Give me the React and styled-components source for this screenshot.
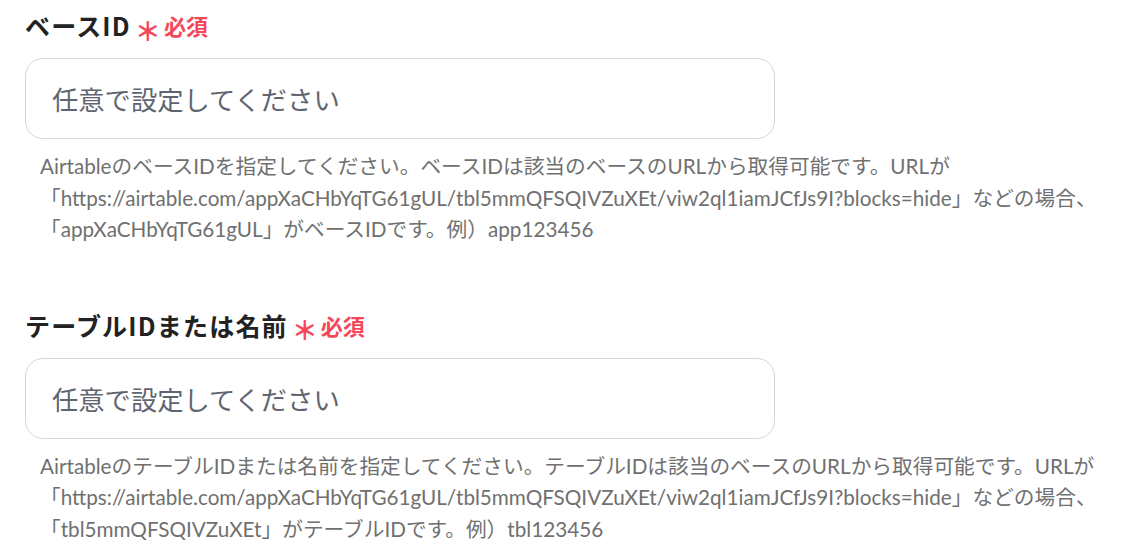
import React from "react";
import styled, { createGlobalStyle } from "styled-components";

const GlobalStyle = createGlobalStyle`
  body {
    margin: 0;
    background: #ffffff;
    font-family: "Noto Sans CJK JP", "Noto Sans", sans-serif;
  }
`;

const Page = styled.main`
  display: flex;
  flex-direction: column;
  gap: 63px;
  padding: 9px 25px 0 25px;
`;

const Field = styled.section`
  display: flex;
  flex-direction: column;
`;

const LabelRow = styled.div`
  display: flex;
  align-items: center;
  height: 32px;
  margin-bottom: 17px;
`;

const LabelText = styled.label`
  font-size: 25px;
  font-weight: 700;
  color: #222222;
  letter-spacing: 1.2px;
`;

const Asterisk = styled.span`
  margin: 9px 3px 0 4px;
  font-size: 26px;
  font-weight: 700;
  line-height: 1;
  color: #f5475a;
`;

const Required = styled.span`
  font-size: 22px;
  font-weight: 700;
  color: #f5475a;
`;

const TextInput = styled.input`
  box-sizing: border-box;
  width: 750px;
  height: 81px;
  padding: 0 26px;
  border: 1px solid #d3d5db;
  border-radius: 18px;
  font-family: inherit;
  font-size: 26.3px;
  color: #222222;
  outline: none;

  &::placeholder {
    color: #5f6570;
  }
`;

const Help = styled.p`
  margin: 12px 0 0 0;
  padding-left: 15px;
  font-family: Lato, "Noto Sans CJK JP", sans-serif;
  font-size: 20.7px;
  line-height: 31.5px;
  color: #707070;
  white-space: nowrap;
`;

const fields = [
  {
    label: "ベースID",
    help: [
      "AirtableのベースIDを指定してください。ベースIDは該当のベースのURLから取得可能です。URLが",
      "「https://airtable.com/appXaCHbYqTG61gUL/tbl5mmQFSQIVZuXEt/viw2ql1iamJCfJs9I?blocks=hide」などの場合、",
      "「appXaCHbYqTG61gUL」がベースIDです。例）app123456",
    ],
  },
  {
    label: "テーブルIDまたは名前",
    help: [
      "AirtableのテーブルIDまたは名前を指定してください。テーブルIDは該当のベースのURLから取得可能です。URLが",
      "「https://airtable.com/appXaCHbYqTG61gUL/tbl5mmQFSQIVZuXEt/viw2ql1iamJCfJs9I?blocks=hide」などの場合、",
      "「tbl5mmQFSQIVZuXEt」がテーブルIDです。例）tbl123456",
    ],
  },
];

const App = () => {
  return (
    <>
      <GlobalStyle />
      <Page>
        {fields.map((f) => (
          <Field key={f.label}>
            <LabelRow>
              <LabelText>{f.label}</LabelText>
              <Asterisk>＊</Asterisk>
              <Required>必須</Required>
            </LabelRow>
            <TextInput placeholder="任意で設定してください" />
            <Help>
              {f.help.map((line, i) => (
                <React.Fragment key={i}>
                  {line}
                  {i < f.help.length - 1 && <br />}
                </React.Fragment>
              ))}
            </Help>
          </Field>
        ))}
      </Page>
    </>
  );
};

export default App;
